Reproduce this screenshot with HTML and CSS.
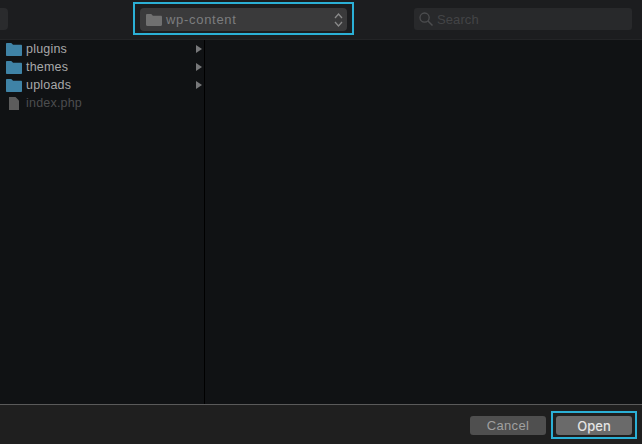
FILE: index.html
```html
<!DOCTYPE html>
<html lang="en">
<head>
    <meta charset="UTF-8">
    <meta name="viewport" content="width=device-width, initial-scale=1.0">
    <title>Open</title>
    <link rel="stylesheet" href="styles.css">
</head>
<body>
    <div class="dialog">
        <div class="toolbar">
            <div class="nav-btn"></div>
            <div class="highlight path-wrap">
                <div class="path-select">
                    <svg class="path-icon" width="16" height="12" viewBox="0 0 16 12"><path d="M0 1.2C0 .5.5 0 1.2 0h3.6c.5 0 .8.2 1.1.6L6.800 1.700H14.800c.7 0 1.200.5 1.200 1.200v7.900c0 .7-.5 1.200-1.200 1.200H1.200C.5 12 0 11.500 0 10.800z" fill="#707070"/></svg>
                    <span class="path-name">wp-content</span>
                    <svg class="updown" width="9" height="16" viewBox="0 0 9 16"><path d="M1 6l3.500-4L8 6M1 10l3.500 4L8 10" fill="none" stroke="#8a8a8a" stroke-width="1.300"/></svg>
                </div>
            </div>
            <div class="search">
                <svg width="14" height="14" viewBox="0 0 14 14"><circle cx="5.600" cy="5.600" r="4.600" fill="none" stroke="#4c4d4f" stroke-width="1.300"/><path d="M9 9l4.500 4.500" stroke="#4c4d4f" stroke-width="1.500"/></svg>
                <span>Search</span>
            </div>
        </div>

        <div class="browser">
            <div class="column">
                <div class="row">
                    <svg class="folder" width="16" height="13" viewBox="0 0 16 13"><path d="M0 1C0 .4.4 0 1 0h4c.4 0 .6.200.9.500L7 1.800h8c.6 0 1 .4 1 1V12c0 .6-.4 1-1 1H1c-.6 0-1-.4-1-1z" fill="#3f83a6"/></svg>
                    <span class="row-name">plugins</span>
                    <span class="arrow"></span>
                </div>
                <div class="row">
                    <svg class="folder" width="16" height="13" viewBox="0 0 16 13"><path d="M0 1C0 .4.4 0 1 0h4c.4 0 .6.200.9.500L7 1.800h8c.6 0 1 .4 1 1V12c0 .6-.4 1-1 1H1c-.6 0-1-.4-1-1z" fill="#3f83a6"/></svg>
                    <span class="row-name">themes</span>
                    <span class="arrow"></span>
                </div>
                <div class="row">
                    <svg class="folder" width="16" height="13" viewBox="0 0 16 13"><path d="M0 1C0 .4.4 0 1 0h4c.4 0 .6.200.9.500L7 1.800h8c.6 0 1 .4 1 1V12c0 .6-.4 1-1 1H1c-.6 0-1-.4-1-1z" fill="#3f83a6"/></svg>
                    <span class="row-name">uploads</span>
                    <span class="arrow"></span>
                </div>
                <div class="row disabled">
                    <svg class="file" width="10" height="13" viewBox="0 0 10 13"><path d="M0 0h6.500L10 3.500V13H0z" fill="#5c5c5c"/></svg>
                    <span class="row-name">index.php</span>
                </div>
            </div>
            <div class="column-rest"></div>
        </div>

        <div class="footer">
            <button class="btn cancel">Cancel</button>
            <div class="highlight open-wrap">
                <button class="btn open">Open</button>
            </div>
        </div>
    </div>
</body>
</html>
```

FILE: styles.css
```css
* {
    margin: 0;
    padding: 0;
    box-sizing: border-box;
}

body {
    font-family: "Liberation Sans", Arial, sans-serif;
    background: #101214;
    overflow: hidden;
}

.dialog {
    width: 642px;
    height: 444px;
    display: flex;
    flex-direction: column;
}

.toolbar {
    height: 40px;
    flex: none;
    display: flex;
    align-items: flex-start;
    background: #1c1d1f;
    border-bottom: 1px solid #232426;
}

.nav-btn {
    width: 8px;
    height: 22px;
    margin-top: 8px;
    background: #2a2b2d;
    border-radius: 0 4px 4px 0;
}

.highlight {
    border: 2px solid #2bb0d6;
}

.path-wrap {
    width: 221px;
    height: 33px;
    margin: 2px 0 0 125px;
    padding: 4px 5px;
}

.path-select {
    height: 23px;
    display: flex;
    align-items: center;
    padding: 0 4px 0 6px;
    background: #3a3a3b;
    border-radius: 4px;
}

.path-icon {
    margin-right: 4px;
}

.path-name {
    flex: 1;
    font-size: 13px;
    letter-spacing: 0.7px;
    color: #7c7d7f;
}

.search {
    width: 218px;
    height: 22px;
    margin: 8px 0 0 60px;
    display: flex;
    align-items: center;
    gap: 4px;
    padding-left: 5px;
    background: #28292b;
    border-radius: 3px;
    font-size: 13px;
    letter-spacing: 0.1px;
    color: #434446;
}

.browser {
    flex: 1;
    display: flex;
    background: #101214;
}

.column {
    width: 205px;
    border-right: 1px solid #000;
}

.row {
    height: 18px;
    display: flex;
    align-items: center;
    padding: 0 2px 0 6px;
    font-size: 12.500px;
    letter-spacing: 0.2px;
    color: #a8a9aa;
}

.row-name {
    flex: 1;
    margin-left: 4px;
}

.disabled {
    color: #4c4d4f;
}

.file {
    margin: 0 3px;
}

.arrow {
    width: 0;
    height: 0;
    border-left: 6px solid #77787a;
    border-top: 4px solid transparent;
    border-bottom: 4px solid transparent;
}

.column-rest {
    flex: 1;
}

.footer {
    height: 40px;
    flex: none;
    display: flex;
    justify-content: flex-end;
    align-items: flex-start;
    padding: 6px 5px 0 0;
    background: #1f1f1f;
    border-top: 1px solid #5a5a5a;
}

.btn {
    display: block;
    width: 76px;
    height: 19px;
    border: none;
    border-radius: 3px;
    font-family: inherit;
    font-size: 13px;
    letter-spacing: 0.3px;
}

.cancel {
    margin: 5px 5px 0 0;
    background: #4f4f4f;
    color: #a0a0a0;
}

.open-wrap {
    width: 86px;
    height: 28px;
    padding: 3px;
}

.open {
    background: #6a6a6a;
    color: #e4e4e4;
    font-family: Inter, "Liberation Sans", sans-serif;
    font-weight: 500;
    letter-spacing: 0;
}
```
